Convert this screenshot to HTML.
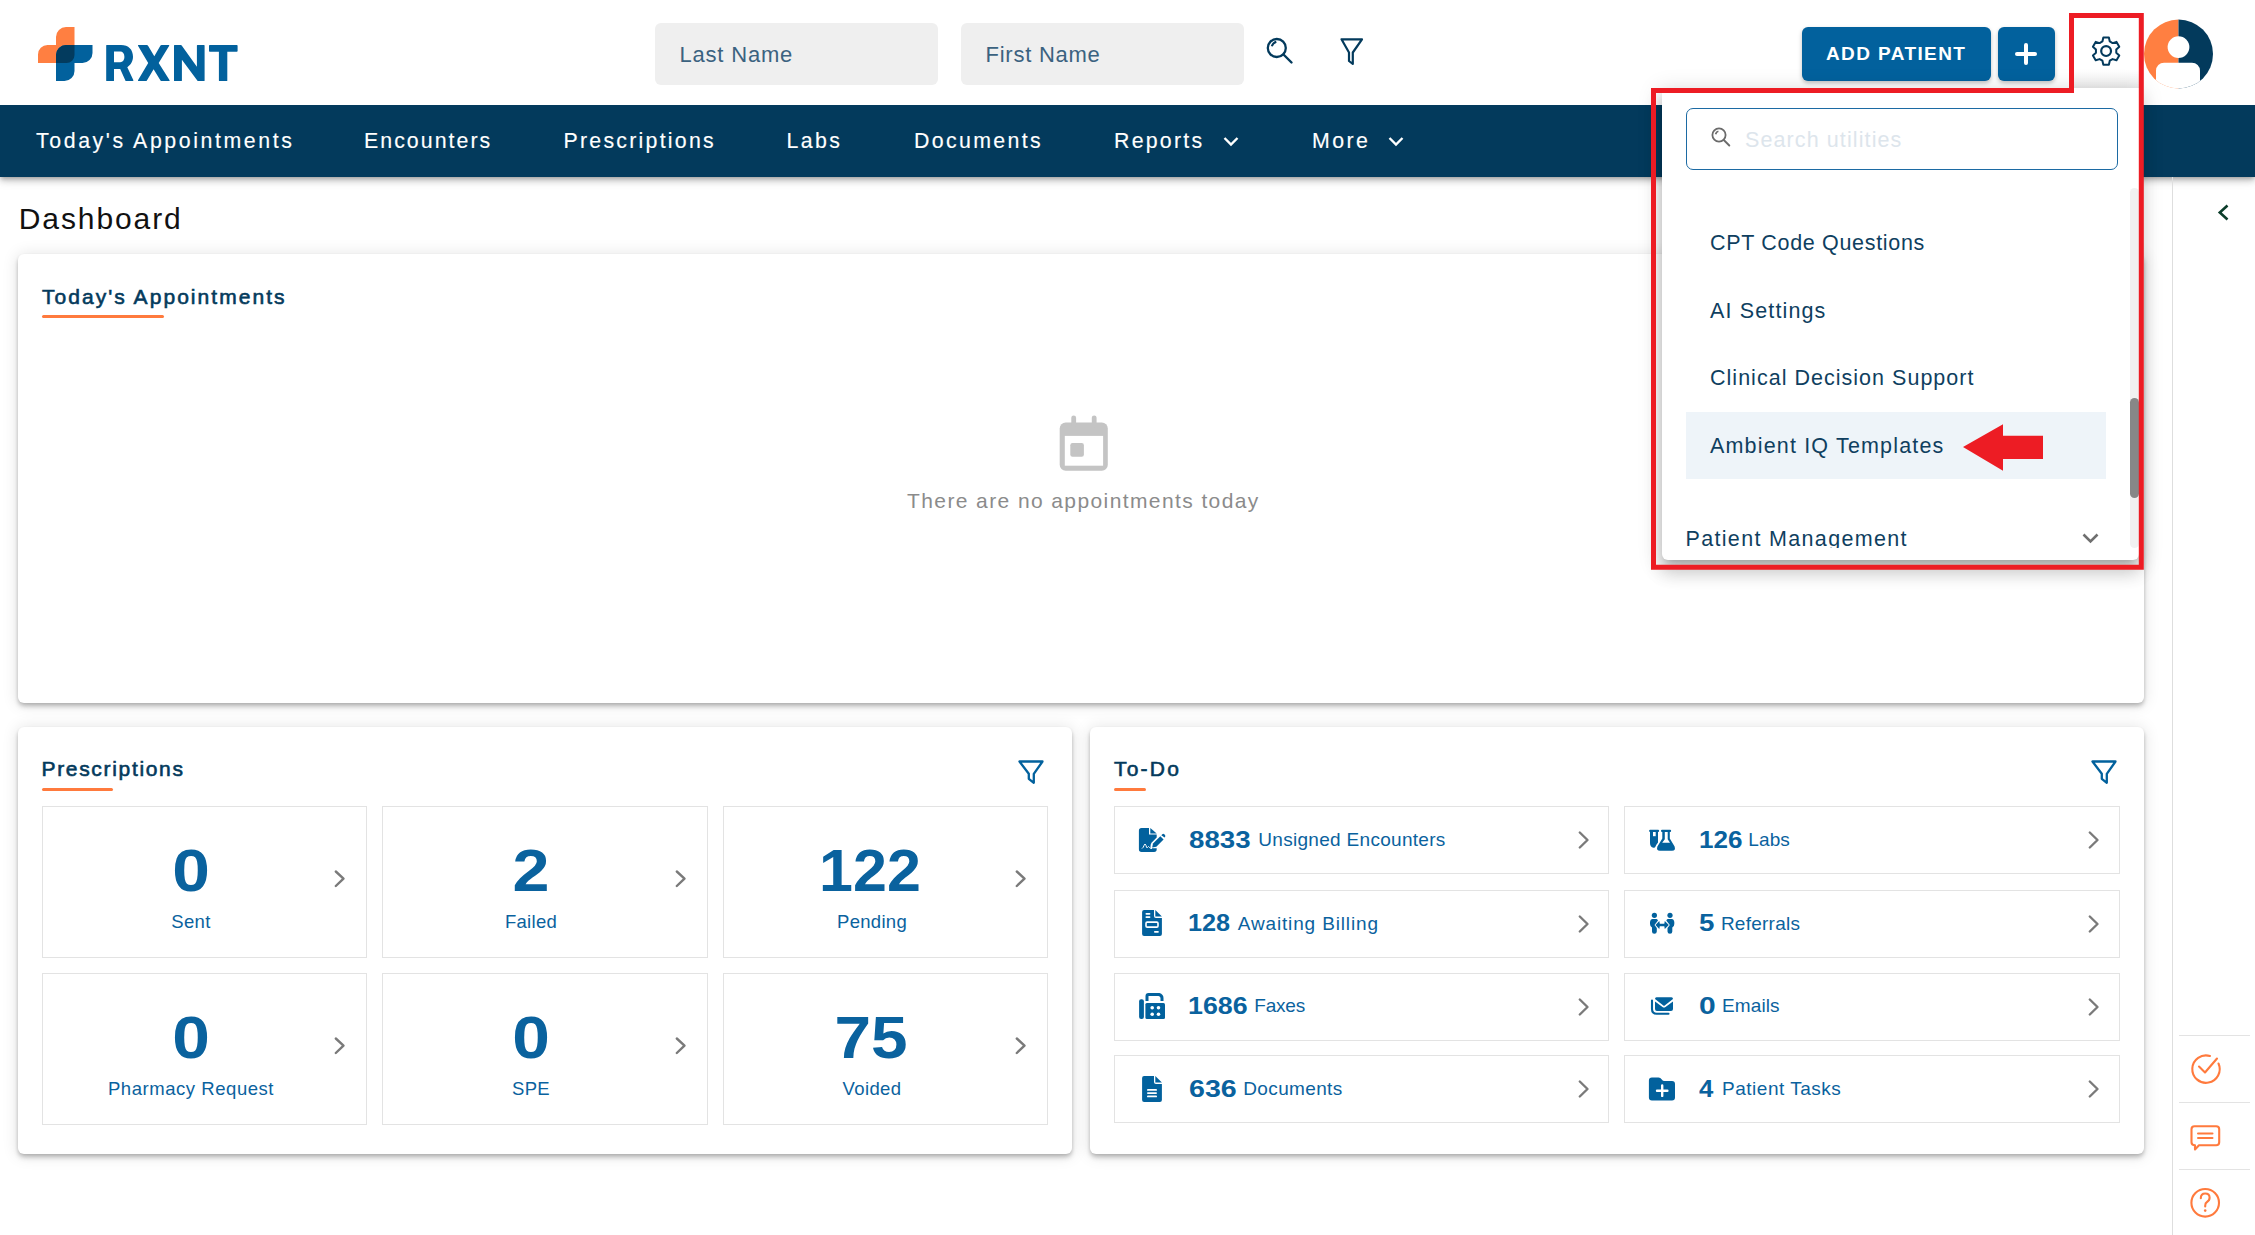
<!DOCTYPE html>
<html><head><meta charset="utf-8"><title>RXNT Dashboard</title>
<style>
html,body{margin:0;padding:0;}
body{width:2255px;height:1235px;overflow:hidden;position:relative;background:#fff;font-family:"Liberation Sans",sans-serif;}
.t{position:absolute;white-space:pre;line-height:1;}
.r{position:absolute;box-sizing:border-box;}
svg{position:absolute;overflow:visible;}
</style></head><body>
<svg style="left:0;top:0" width="260" height="100">
<path d="M56,37 A10,10 0 0 1 66,27 L74.5,27 L74.5,55 A8,8 0 0 1 66.5,63 L38,63 L38,54.5 A9.5,9.5 0 0 1 47.5,45 L56,45 Z" fill="#ff7f41"/>
<path d="M56,55 A10,10 0 0 1 66,45 L92.5,45 L92.5,53 A10,10 0 0 1 82.5,63 L74.5,63 L74.5,71 A10,10 0 0 1 64.5,81 L56,81 Z" fill="#02619d"/>
<path d="M56,55 A10,10 0 0 1 66,45 L74.5,45 L74.5,55 A8,8 0 0 1 66.5,63 L56,63 Z" fill="#033b5e"/>
</svg>
<svg style="left:0;top:0" width="260" height="100"><g fill="#02619d">
<path fill-rule="evenodd" d="M106.6,45 L121,45 C128.5,45 133,49.5 133,56.8 C133,61.5 130.5,65 127.3,67.2 L133.4,80.2 Q133.6,81 132.8,81 L125.6,81 L120.2,68.9 L114,68.9 L114,80.4 Q114,81 113.4,81 L106.6,81 Q106.2,81 106.2,80.4 L106.2,45.5 Q106.2,45 106.6,45 Z M114,51.5 L120.2,51.5 C122.8,51.5 124.4,53.5 124.4,56.8 C124.4,60 122.8,62.2 120.2,62.2 L114,62.2 Z"/>
<path d="M138.4,45 L146.8,45 Q147.5,45 147.9,45.6 L154.3,56.3 L160.5,45.6 Q160.9,45 161.6,45 L168.8,45 Q169.6,45 169.2,45.7 L158.7,63 L169.6,80.3 Q170,81 169.2,81 L161.6,81 Q160.9,81 160.5,80.4 L153.6,69.3 L146.9,80.4 Q146.5,81 145.8,81 L138.4,81 Q137.6,81 138,80.3 L148.2,63 L138,45.7 Q137.6,45 138.4,45 Z"/>
<path d="M174.6,45 L180.9,45 Q181.4,45 181.7,45.5 L196.9,66.8 L196.9,45.6 Q196.9,45 197.5,45 L204,45 Q204.6,45 204.6,45.6 L204.6,80.4 Q204.6,81 204,81 L198.2,81 Q197.6,81 197.3,80.5 L181.9,59.7 L181.9,80.4 Q181.9,81 181.3,81 L174.6,81 Q174,81 174,80.4 L174,45.6 Q174,45 174.6,45 Z"/>
<path d="M209.8,45 L236.8,45 Q237.6,45 237.6,45.8 L237.6,51 Q237.6,51.8 236.8,51.8 L227.3,51.8 L227.3,80.4 Q227.3,81 226.7,81 L219.5,81 Q218.9,81 218.9,80.4 L218.9,51.8 L209.8,51.8 Q209,51.8 209,51 L209,45.8 Q209,45 209.8,45 Z"/>
</g></svg>
<div class="r" style="left:655px;top:23px;width:283px;height:62px;background:#efefef;border-radius:6px;"></div>
<div class="r" style="left:961px;top:23px;width:283px;height:62px;background:#efefef;border-radius:6px;"></div>
<div class="t " style="left:679.5px;top:43.57px;font-size:22px;color:#3b6280;font-weight:400;letter-spacing:0.8px;">Last Name</div>
<div class="t " style="left:985.5px;top:43.57px;font-size:22px;color:#3b6280;font-weight:400;letter-spacing:0.75px;">First Name</div>
<svg style="left:1260px;top:30px" width="40" height="40" viewBox="1260 30 40 40">
<circle cx="1276.8" cy="48" r="9" fill="none" stroke="#033a5c" stroke-width="2.3"/>
<path d="M1283.5,54.5 L1291.5,62.5" stroke="#033a5c" stroke-width="2.4" stroke-linecap="round"/>
<path d="M1271.8,46.3 Q1272.8,43 1276.3,41.8" fill="none" stroke="#033a5c" stroke-width="2"/>
</svg>
<svg style="left:1330px;top:30px" width="40" height="40" viewBox="1330 30 40 40">
<path d="M1341.5,39.3 L1362,39.3 L1352.8,52.5 L1352.8,64 L1349,61 L1349,52.5 Z" fill="none" stroke="#033a5c" stroke-width="2.2" stroke-linejoin="round"/>
</svg>
<div class="r" style="left:1802px;top:27px;width:189px;height:54px;background:#02619d;border-radius:6px;box-shadow:0 2px 4px rgba(0,0,0,.25);"></div>
<div class="t " style="left:1826.0px;top:44.21px;font-size:19px;color:#fff;font-weight:700;letter-spacing:1.4px;">ADD PATIENT</div>
<div class="r" style="left:1998px;top:27px;width:57px;height:54px;background:#02619d;border-radius:6px;box-shadow:0 2px 4px rgba(0,0,0,.25);"></div>
<div class="r" style="left:2015px;top:51.5px;width:22px;height:4px;background:#fff;border-radius:2px;"></div>
<div class="r" style="left:2024px;top:42.5px;width:4px;height:22px;background:#fff;border-radius:2px;"></div>
<div class="r" style="left:2074px;top:70px;width:65px;height:18px;background:linear-gradient(rgba(0,0,0,0),rgba(0,0,0,.07));"></div>
<svg style="left:0;top:0" width="2255" height="100"><path d="M2103.33,37.48 L2108.87,37.48 L2109.79,41.48 L2112.58,43.10 L2116.51,41.89 L2119.28,46.69 L2116.27,49.49 L2116.27,52.71 L2119.28,55.51 L2116.51,60.31 L2112.58,59.10 L2109.79,60.72 L2108.87,64.72 L2103.33,64.72 L2102.41,60.72 L2099.62,59.10 L2095.69,60.31 L2092.92,55.51 L2095.93,52.71 L2095.93,49.49 L2092.92,46.69 L2095.69,41.89 L2099.62,43.10 L2102.41,41.48 Z" fill="none" stroke="#033a5c" stroke-width="2" stroke-linejoin="round"/>
<circle cx="2106.1" cy="51.1" r="4.9" fill="none" stroke="#033a5c" stroke-width="2.2"/></svg>
<svg style="left:0;top:0" width="2255" height="100">
<defs><clipPath id="av"><circle cx="2178.5" cy="54" r="34.5"/></clipPath></defs>
<g clip-path="url(#av)">
<rect x="2140" y="15" width="38.5" height="80" fill="#ff7f41"/>
<rect x="2178.5" y="15" width="40" height="80" fill="#033a5c"/>
<circle cx="2178.5" cy="47.1" r="10.9" fill="#fff"/>
<rect x="2156" y="62.7" width="44" height="40" rx="8" fill="#fff"/>
</g></svg>
<div class="r" style="left:0px;top:105px;width:2255px;height:72px;background:#033a5c;clip-path:inset(0 0 -40px 0);box-shadow:0 2px 4px -1px rgba(0,0,0,.22),0 4px 6px 0 rgba(0,0,0,.16),0 2px 12px 0 rgba(0,0,0,.12);"></div>
<div class="t " style="left:36.0px;top:130.77px;font-size:21.3px;color:#fff;font-weight:400;letter-spacing:2.6px;-webkit-text-stroke:0.15px #fff;">Today's Appointments</div>
<div class="t " style="left:364.0px;top:130.77px;font-size:21.3px;color:#fff;font-weight:400;letter-spacing:2.0500000000000003px;-webkit-text-stroke:0.15px #fff;">Encounters</div>
<div class="t " style="left:563.5px;top:130.77px;font-size:21.3px;color:#fff;font-weight:400;letter-spacing:2.2600000000000002px;-webkit-text-stroke:0.15px #fff;">Prescriptions</div>
<div class="t " style="left:786.5px;top:130.77px;font-size:21.3px;color:#fff;font-weight:400;letter-spacing:2.43px;-webkit-text-stroke:0.15px #fff;">Labs</div>
<div class="t " style="left:914.0px;top:130.77px;font-size:21.3px;color:#fff;font-weight:400;letter-spacing:2.3800000000000003px;-webkit-text-stroke:0.15px #fff;">Documents</div>
<div class="t " style="left:1114.0px;top:130.77px;font-size:21.3px;color:#fff;font-weight:400;letter-spacing:2.2600000000000002px;-webkit-text-stroke:0.15px #fff;">Reports</div>
<div class="t " style="left:1312.0px;top:130.77px;font-size:21.3px;color:#fff;font-weight:400;letter-spacing:2.48px;-webkit-text-stroke:0.15px #fff;">More</div>
<svg style="left:1221px;top:132px" width="20" height="20"><path d="M3.5,6 L10,12.5 L16.5,6" fill="none" stroke="#fff" stroke-width="2.4"/></svg>
<svg style="left:1386px;top:132px" width="20" height="20"><path d="M3.5,6 L10,12.5 L16.5,6" fill="none" stroke="#fff" stroke-width="2.4"/></svg>
<div class="t " style="left:18.8px;top:203.50px;font-size:30px;color:#111;font-weight:400;letter-spacing:1.9px;">Dashboard</div>
<div class="r" style="left:18px;top:254px;width:2126px;height:449px;background:#fff;border-radius:6px;box-shadow:0 2px 4px -1px rgba(0,0,0,.2),0 4px 5px 0 rgba(0,0,0,.14),0 1px 16px 1px rgba(0,0,0,.11);"></div>
<div class="r" style="left:18px;top:727px;width:1054px;height:427px;background:#fff;border-radius:6px;box-shadow:0 2px 4px -1px rgba(0,0,0,.2),0 4px 5px 0 rgba(0,0,0,.14),0 1px 16px 1px rgba(0,0,0,.11);"></div>
<div class="r" style="left:1090px;top:727px;width:1054px;height:427px;background:#fff;border-radius:6px;box-shadow:0 2px 4px -1px rgba(0,0,0,.2),0 4px 5px 0 rgba(0,0,0,.14),0 1px 16px 1px rgba(0,0,0,.11);"></div>
<div class="t " style="left:42.0px;top:286.32px;font-size:21px;color:#033a5c;font-weight:400;letter-spacing:2.05px;-webkit-text-stroke:0.6px #033a5c;">Today's Appointments</div>
<div class="r" style="left:42px;top:315px;width:122px;height:3px;background:#ff7a3d;border-radius:2px;"></div>
<svg style="left:1059px;top:414px" width="50" height="58" viewBox="0 0 50 58">
<rect x="0.7" y="8.5" width="48.1" height="48.2" rx="6" fill="#c4c4c4"/>
<rect x="5.8" y="21.9" width="38.3" height="29.8" fill="#fff"/>
<rect x="11.3" y="29" width="13.6" height="13.7" rx="2.2" fill="#c4c4c4"/>
<rect x="12.3" y="1.4" width="4.8" height="12" rx="2.4" fill="#c4c4c4"/>
<rect x="32.8" y="1.4" width="4.8" height="12" rx="2.4" fill="#c4c4c4"/>
</svg>
<div class="t " style="left:907.0px;top:490.32px;font-size:21px;color:#8b8b8b;font-weight:400;letter-spacing:1.4px;">There are no appointments today</div>
<div class="t " style="left:41.5px;top:758.02px;font-size:21px;color:#033a5c;font-weight:400;letter-spacing:1.67px;-webkit-text-stroke:0.6px #033a5c;">Prescriptions</div>
<div class="r" style="left:42px;top:788px;width:71px;height:3px;background:#ff7a3d;border-radius:2px;"></div>
<div class="t " style="left:1114.0px;top:758.02px;font-size:21px;color:#033a5c;font-weight:400;letter-spacing:2.2px;-webkit-text-stroke:0.6px #033a5c;">To-Do</div>
<div class="r" style="left:1114px;top:788px;width:32px;height:3px;background:#ff7a3d;border-radius:2px;"></div>
<div class="r" style="left:42px;top:806px;width:325px;height:152px;border:1px solid #e3e3e3;background:#fff;"></div>
<div class="t" style="left:41.0px;top:841.20px;width:300px;text-align:center;font-size:60px;font-weight:700;color:#0a629e;transform:scaleX(1.127);">0</div>
<div class="t" style="left:41.0px;top:912.64px;width:300px;text-align:center;font-size:18.5px;color:#0a629e;letter-spacing:0.3px">Sent</div>
<svg style="left:334px;top:870px" width="14" height="20"><path d="M1.8,1.5 L9.5,8.6 L1.8,16" fill="none" stroke="#7a7a7a" stroke-width="2.4" stroke-linecap="round" stroke-linejoin="round"/></svg>
<div class="r" style="left:382px;top:806px;width:326px;height:152px;border:1px solid #e3e3e3;background:#fff;"></div>
<div class="t" style="left:381.0px;top:841.20px;width:300px;text-align:center;font-size:60px;font-weight:700;color:#0a629e;transform:scaleX(1.107);">2</div>
<div class="t" style="left:381.0px;top:912.64px;width:300px;text-align:center;font-size:18.5px;color:#0a629e;letter-spacing:0.3px">Failed</div>
<svg style="left:675px;top:870px" width="14" height="20"><path d="M1.8,1.5 L9.5,8.6 L1.8,16" fill="none" stroke="#7a7a7a" stroke-width="2.4" stroke-linecap="round" stroke-linejoin="round"/></svg>
<div class="r" style="left:723px;top:806px;width:325px;height:152px;border:1px solid #e3e3e3;background:#fff;"></div>
<div class="t" style="left:720.0px;top:841.20px;width:300px;text-align:center;font-size:60px;font-weight:700;color:#0a629e;transform:scaleX(1.017);">122</div>
<div class="t" style="left:722.0px;top:912.64px;width:300px;text-align:center;font-size:18.5px;color:#0a629e;letter-spacing:0.3px">Pending</div>
<svg style="left:1015px;top:870px" width="14" height="20"><path d="M1.8,1.5 L9.5,8.6 L1.8,16" fill="none" stroke="#7a7a7a" stroke-width="2.4" stroke-linecap="round" stroke-linejoin="round"/></svg>
<div class="r" style="left:42px;top:973px;width:325px;height:152px;border:1px solid #e3e3e3;background:#fff;"></div>
<div class="t" style="left:41.0px;top:1008.20px;width:300px;text-align:center;font-size:60px;font-weight:700;color:#0a629e;transform:scaleX(1.127);">0</div>
<div class="t" style="left:41.0px;top:1079.64px;width:300px;text-align:center;font-size:18.5px;color:#0a629e;letter-spacing:0.55px">Pharmacy Request</div>
<svg style="left:334px;top:1037px" width="14" height="20"><path d="M1.8,1.5 L9.5,8.6 L1.8,16" fill="none" stroke="#7a7a7a" stroke-width="2.4" stroke-linecap="round" stroke-linejoin="round"/></svg>
<div class="r" style="left:382px;top:973px;width:326px;height:152px;border:1px solid #e3e3e3;background:#fff;"></div>
<div class="t" style="left:381.0px;top:1008.20px;width:300px;text-align:center;font-size:60px;font-weight:700;color:#0a629e;transform:scaleX(1.127);">0</div>
<div class="t" style="left:381.0px;top:1079.64px;width:300px;text-align:center;font-size:18.5px;color:#0a629e;letter-spacing:0.3px">SPE</div>
<svg style="left:675px;top:1037px" width="14" height="20"><path d="M1.8,1.5 L9.5,8.6 L1.8,16" fill="none" stroke="#7a7a7a" stroke-width="2.4" stroke-linecap="round" stroke-linejoin="round"/></svg>
<div class="r" style="left:723px;top:973px;width:325px;height:152px;border:1px solid #e3e3e3;background:#fff;"></div>
<div class="t" style="left:721.0px;top:1008.20px;width:300px;text-align:center;font-size:60px;font-weight:700;color:#0a629e;transform:scaleX(1.095);">75</div>
<div class="t" style="left:722.0px;top:1079.64px;width:300px;text-align:center;font-size:18.5px;color:#0a629e;letter-spacing:0.4px">Voided</div>
<svg style="left:1015px;top:1037px" width="14" height="20"><path d="M1.8,1.5 L9.5,8.6 L1.8,16" fill="none" stroke="#7a7a7a" stroke-width="2.4" stroke-linecap="round" stroke-linejoin="round"/></svg>
<svg style="left:1018px;top:760px" width="30" height="30"><path d="M1.5,1.5 L24.5,1.5 L15.8,13.8 L15.8,22.8 L10.8,18.8 L10.8,13.8 Z" fill="none" stroke="#02619d" stroke-width="2.3" stroke-linejoin="round"/></svg>
<svg style="left:2090.5px;top:760px" width="30" height="30"><path d="M1.5,1.5 L24.5,1.5 L15.8,13.8 L15.8,22.8 L10.8,18.8 L10.8,13.8 Z" fill="none" stroke="#02619d" stroke-width="2.3" stroke-linejoin="round"/></svg>
<div class="r" style="left:1114.3px;top:806.4px;width:495px;height:68px;border:1px solid #e3e3e3;background:#fff;"></div>
<div class="t " style="left:1189.1px;top:827.96px;font-size:24.5px;color:#0a629e;font-weight:700;letter-spacing:0px;transform:scaleX(1.13);transform-origin:0 0;">8833</div>
<div class="t " style="left:1258.3px;top:830.21px;font-size:19px;color:#0a629e;font-weight:400;letter-spacing:0.3px;">Unsigned Encounters</div>
<svg style="left:1577.8px;top:831.4px" width="14" height="20"><path d="M1.8,1.5 L9.5,9 L1.8,16.5" fill="none" stroke="#7a7a7a" stroke-width="2.4" stroke-linecap="round" stroke-linejoin="round"/></svg>
<div class="r" style="left:1624.4px;top:806.4px;width:496px;height:68px;border:1px solid #e3e3e3;background:#fff;"></div>
<div class="t " style="left:1698.6px;top:827.96px;font-size:24.5px;color:#0a629e;font-weight:700;letter-spacing:0px;transform:scaleX(1.064);transform-origin:0 0;">126</div>
<div class="t " style="left:1748.3px;top:830.21px;font-size:19px;color:#0a629e;font-weight:400;letter-spacing:0.1px;">Labs</div>
<svg style="left:2087.9px;top:831.4px" width="14" height="20"><path d="M1.8,1.5 L9.5,9 L1.8,16.5" fill="none" stroke="#7a7a7a" stroke-width="2.4" stroke-linecap="round" stroke-linejoin="round"/></svg>
<div class="r" style="left:1114.3px;top:889.7px;width:495px;height:68px;border:1px solid #e3e3e3;background:#fff;"></div>
<div class="t " style="left:1188.1px;top:911.26px;font-size:24.5px;color:#0a629e;font-weight:700;letter-spacing:0px;transform:scaleX(1.03);transform-origin:0 0;">128</div>
<div class="t " style="left:1237.7px;top:913.51px;font-size:19px;color:#0a629e;font-weight:400;letter-spacing:0.86px;">Awaiting Billing</div>
<svg style="left:1577.8px;top:914.7px" width="14" height="20"><path d="M1.8,1.5 L9.5,9 L1.8,16.5" fill="none" stroke="#7a7a7a" stroke-width="2.4" stroke-linecap="round" stroke-linejoin="round"/></svg>
<div class="r" style="left:1624.4px;top:889.7px;width:496px;height:68px;border:1px solid #e3e3e3;background:#fff;"></div>
<div class="t " style="left:1699.4px;top:911.26px;font-size:24.5px;color:#0a629e;font-weight:700;letter-spacing:0px;transform:scaleX(1.13);transform-origin:0 0;">5</div>
<div class="t " style="left:1720.9px;top:913.51px;font-size:19px;color:#0a629e;font-weight:400;letter-spacing:0.25px;">Referrals</div>
<svg style="left:2087.9px;top:914.7px" width="14" height="20"><path d="M1.8,1.5 L9.5,9 L1.8,16.5" fill="none" stroke="#7a7a7a" stroke-width="2.4" stroke-linecap="round" stroke-linejoin="round"/></svg>
<div class="r" style="left:1114.3px;top:972.5px;width:495px;height:68px;border:1px solid #e3e3e3;background:#fff;"></div>
<div class="t " style="left:1188.1px;top:994.06px;font-size:24.5px;color:#0a629e;font-weight:700;letter-spacing:0px;transform:scaleX(1.094);transform-origin:0 0;">1686</div>
<div class="t " style="left:1254.3px;top:996.31px;font-size:19px;color:#0a629e;font-weight:400;letter-spacing:-0.2px;">Faxes</div>
<svg style="left:1577.8px;top:997.5px" width="14" height="20"><path d="M1.8,1.5 L9.5,9 L1.8,16.5" fill="none" stroke="#7a7a7a" stroke-width="2.4" stroke-linecap="round" stroke-linejoin="round"/></svg>
<div class="r" style="left:1624.4px;top:972.5px;width:496px;height:68px;border:1px solid #e3e3e3;background:#fff;"></div>
<div class="t " style="left:1699.4px;top:994.06px;font-size:24.5px;color:#0a629e;font-weight:700;letter-spacing:0px;transform:scaleX(1.225);transform-origin:0 0;">0</div>
<div class="t " style="left:1722.1px;top:996.31px;font-size:19px;color:#0a629e;font-weight:400;letter-spacing:0.1px;">Emails</div>
<svg style="left:2087.9px;top:997.5px" width="14" height="20"><path d="M1.8,1.5 L9.5,9 L1.8,16.5" fill="none" stroke="#7a7a7a" stroke-width="2.4" stroke-linecap="round" stroke-linejoin="round"/></svg>
<div class="r" style="left:1114.3px;top:1055.2px;width:495px;height:68px;border:1px solid #e3e3e3;background:#fff;"></div>
<div class="t " style="left:1189.4px;top:1076.76px;font-size:24.5px;color:#0a629e;font-weight:700;letter-spacing:0px;transform:scaleX(1.167);transform-origin:0 0;">636</div>
<div class="t " style="left:1243.3px;top:1079.01px;font-size:19px;color:#0a629e;font-weight:400;letter-spacing:0.35px;">Documents</div>
<svg style="left:1577.8px;top:1080.2px" width="14" height="20"><path d="M1.8,1.5 L9.5,9 L1.8,16.5" fill="none" stroke="#7a7a7a" stroke-width="2.4" stroke-linecap="round" stroke-linejoin="round"/></svg>
<div class="r" style="left:1624.4px;top:1055.2px;width:496px;height:68px;border:1px solid #e3e3e3;background:#fff;"></div>
<div class="t " style="left:1699.4px;top:1076.76px;font-size:24.5px;color:#0a629e;font-weight:700;letter-spacing:0px;transform:scaleX(1.05);transform-origin:0 0;">4</div>
<div class="t " style="left:1722.1px;top:1079.01px;font-size:19px;color:#0a629e;font-weight:400;letter-spacing:0.5px;">Patient Tasks</div>
<svg style="left:2087.9px;top:1080.2px" width="14" height="20"><path d="M1.8,1.5 L9.5,9 L1.8,16.5" fill="none" stroke="#7a7a7a" stroke-width="2.4" stroke-linecap="round" stroke-linejoin="round"/></svg>
<svg style="left:1130px;top:820px" width="50" height="40" viewBox="0 0 50 40"><path d="M11.5,8.1 L19,8.1 L19,14.6 L26.7,14.6 L26.7,17.5 L21.5,22.8 Q20.5,24.5 20.5,26.5 L20.5,28.2 L26.7,28.2 L26.7,29.3 Q26.7,31.9 24.1,31.9 L11.5,31.9 Q8.9,31.9 8.9,29.3 L8.9,10.7 Q8.9,8.1 11.5,8.1 Z" fill="#02619d"/>
<path d="M20.3,8.1 L26.7,13.6 L20.3,13.6 Z" fill="#02619d"/>
<path d="M12,28.5 Q13.5,27.5 14,25.5 Q15,22.5 16,25.5 Q16.5,28.5 17.5,27.5 Q18.5,25.5 19.5,27.5 Q20,28.5 22,28.5" fill="none" stroke="#fff" stroke-width="1"/>
<path d="M22.2,27.6 L23,23.5 L30.3,16.2 L33.6,19.5 L26.3,26.8 Z" fill="#02619d"/>
<path d="M31.3,15.2 L32.3,14.2 Q33.3,13.5 34.3,14.2 L35,14.9 Q35.7,15.9 35,16.9 L34.6,17.5 Z" fill="#02619d"/></svg>
<svg style="left:1130px;top:903px" width="50" height="40" viewBox="0 0 50 40"><path d="M14.1,7 L24,7 L24,13 Q24,15 26,15 L31.9,15 L31.9,31 Q31.9,33 29.9,33 L14.1,33 Q12.1,33 12.1,31 L12.1,9 Q12.1,7 14.1,7 Z" fill="#02619d"/>
<path d="M25.3,7 L31.9,13.5 L25.3,13.5 Z" fill="#02619d"/>
<rect x="15.5" y="10" width="4.9" height="1.8" rx="0.8" fill="#fff"/>
<rect x="15.5" y="13.3" width="4.9" height="1.8" rx="0.8" fill="#fff"/>
<rect x="16" y="19.1" width="12" height="5" rx="1.2" fill="none" stroke="#fff" stroke-width="1.6"/>
<rect x="24" y="27.9" width="4.8" height="1.9" rx="0.8" fill="#fff"/></svg>
<svg style="left:1130px;top:986px" width="50" height="40" viewBox="0 0 50 40"><rect x="9.1" y="13.3" width="4.8" height="19.6" rx="2" fill="#02619d"/>
<rect x="15.4" y="17" width="19.6" height="15.9" rx="1.5" fill="#02619d"/>
<path d="M17,14.9 L17,10 Q17,8.5 18.5,8.5 L29,8.5 Q32,9.5 32,12 L32,14.9" fill="none" stroke="#02619d" stroke-width="3"/>
<circle cx="22.2" cy="21.7" r="1.8" fill="#fff"/><circle cx="28.5" cy="21.7" r="1.8" fill="#fff"/>
<circle cx="22.2" cy="28.3" r="1.8" fill="#fff"/><circle cx="28.5" cy="28.3" r="1.8" fill="#fff"/></svg>
<svg style="left:1130px;top:1069px" width="50" height="40" viewBox="0 0 50 40"><path d="M14.1,7 L24,7 L24,13 Q24,15 26,15 L31.9,15 L31.9,31 Q31.9,33 29.9,33 L14.1,33 Q12.1,33 12.1,31 L12.1,9 Q12.1,7 14.1,7 Z" fill="#02619d"/>
<path d="M25.3,7 L31.9,13.5 L25.3,13.5 Z" fill="#02619d"/>
<rect x="17" y="20" width="10" height="1.8" rx="0.9" fill="#fff"/>
<rect x="17" y="23.2" width="10" height="1.8" rx="0.9" fill="#fff"/>
<rect x="17" y="26.5" width="10" height="1.8" rx="0.9" fill="#fff"/></svg>
<svg style="left:1640px;top:820px" width="50" height="40" viewBox="0 0 50 40"><rect x="9.1" y="9.7" width="10" height="2.4" rx="1" fill="#02619d"/>
<path d="M10,11.5 L18,11.5 L18,22.5 Q16,25 15.5,26.5 Q15,28 13.5,27.8 Q10,27 10,23 Z" fill="#02619d"/>
<rect x="13" y="12" width="2.7" height="4.2" fill="#fff"/>
<rect x="21" y="9.7" width="10.1" height="2.4" rx="1" fill="#02619d"/>
<path d="M22.3,11.5 L29.8,11.5 L29.8,18.5 L34.6,26.5 Q36,30.8 32,30.8 L20,30.8 Q16,30.8 17.4,26.5 L22.3,18.5 Z" fill="#02619d"/>
<path d="M24.8,12 L27.7,12 L27.7,19.2 L30,22.8 L22.2,22.8 L24.8,19.2 Z" fill="#fff"/></svg>
<svg style="left:1640px;top:903px" width="50" height="40" viewBox="0 0 50 40"><circle cx="14.4" cy="12.3" r="2.6" fill="#02619d"/><circle cx="30" cy="12.3" r="2.6" fill="#02619d"/>
<path d="M12.5,16 L16.5,16 Q17.5,16.3 18,17.5 L14.5,22 L16.8,25 L16.8,28.5 Q16.8,30.8 14.3,30.8 Q12,30.8 12,28.5 L12,24.5 Q10,23.5 10,21 L10,19 Q10.5,16 12.5,16 Z" fill="#02619d"/>
<path d="M31.8,16 L27.8,16 Q26.8,16.3 26.3,17.5 L29.8,22 L27.5,25 L27.5,28.5 Q27.5,30.8 30,30.8 Q32.3,30.8 32.3,28.5 L32.3,24.5 Q34.3,23.5 34.3,21 L34.3,19 Q33.8,16 31.8,16 Z" fill="#02619d"/>
<path d="M15.5,22 L19.3,18 L19.8,20.7 L24.3,20.7 L24.8,18 L28.8,22 L24.8,26 L24.3,23.3 L19.8,23.3 L19.3,26 Z" fill="#02619d"/></svg>
<svg style="left:1640px;top:986px" width="50" height="40" viewBox="0 0 50 40"><path d="M16.5,11.2 L31.5,11.2 Q33,11.5 33,13 L24,20 L15,13 Q15,11.5 16.5,11.2 Z" fill="#02619d"/>
<path d="M15,15.5 L22.5,21 Q24,22 25.5,21 L33,15.5 L33,23 Q33,24.9 31,24.9 L17,24.9 Q15,24.9 15,23 Z" fill="#02619d"/>
<path d="M12,14.5 L12,23 Q12,27.7 16.7,27.7 L28.5,27.7" fill="none" stroke="#02619d" stroke-width="2.1" stroke-linecap="round"/></svg>
<svg style="left:1640px;top:1069px" width="50" height="40" viewBox="0 0 50 40"><path d="M11.9,8.6 L18.5,8.6 Q20.5,8.6 21.8,10.5 Q22.8,12 24.5,12 L32,12 Q35,12 35,15 L35,28.6 Q35,31.6 32,31.6 L11.9,31.6 Q8.9,31.6 8.9,28.6 L8.9,11.6 Q8.9,8.6 11.9,8.6 Z" fill="#02619d"/>
<path d="M17,21.7 L27.4,21.7 M22.2,16.5 L22.2,26.9" stroke="#fff" stroke-width="2.4" stroke-linecap="round"/></svg>
<div class="r" style="left:2172px;top:177px;width:1px;height:1058px;background:#dedede;"></div>
<svg style="left:2213px;top:202px" width="20" height="24"><path d="M14.5,3.5 L6.8,10.5 L14.5,17.5" fill="none" stroke="#0b3d2a" stroke-width="2.6"/></svg>
<div class="r" style="left:2179px;top:1035px;width:71px;height:1px;background:#e3e3e3;"></div>
<div class="r" style="left:2179px;top:1102px;width:71px;height:1px;background:#e3e3e3;"></div>
<div class="r" style="left:2179px;top:1169px;width:71px;height:1px;background:#e3e3e3;"></div>
<svg style="left:2180px;top:1040px" width="50" height="190" viewBox="2180 1040 50 190">
<path d="M2218.5,1063.5 A13.7,13.7 0 1 1 2210,1056" fill="none" stroke="#ff7a3d" stroke-width="2.1" stroke-linecap="round"/>
<path d="M2199,1066.5 L2205,1072.5 L2217,1058.5" fill="none" stroke="#ff7a3d" stroke-width="2.1" stroke-linecap="round" stroke-linejoin="round"/>
<path d="M2194.5,1126.3 L2216.2,1126.3 Q2219.2,1126.3 2219.2,1129.3 L2219.2,1142.3 Q2219.2,1145.3 2216.2,1145.3 L2199,1145.3 L2195,1149.5 L2195,1145.3 Q2191.5,1145.3 2191.5,1142.3 L2191.5,1129.3 Q2191.5,1126.3 2194.5,1126.3 Z" fill="none" stroke="#ff7a3d" stroke-width="2.1" stroke-linejoin="round"/>
<path d="M2198,1133.5 L2212.5,1133.5 M2198,1138 L2212.5,1138" stroke="#ff7a3d" stroke-width="2" stroke-linecap="round"/>
<circle cx="2205.2" cy="1202.8" r="13.8" fill="none" stroke="#ff7a3d" stroke-width="2.1"/>
<path d="M2200.8,1198.3 Q2200.8,1193.5 2205.2,1193.5 Q2209.6,1193.5 2209.6,1197.8 Q2209.6,1200.5 2207,1202 Q2205.2,1203 2205.2,1205.8 L2205.2,1206.5" fill="none" stroke="#ff7a3d" stroke-width="2.1" stroke-linecap="round"/>
<circle cx="2205.2" cy="1210.6" r="1.3" fill="#ff7a3d"/>
</svg>
<div class="r" style="left:1662px;top:88px;width:477px;height:472px;background:#fff;border-radius:0 0 6px 6px;box-shadow:0 7px 8px -4px rgba(0,0,0,.2),0 12px 17px 2px rgba(0,0,0,.14),0 5px 22px 4px rgba(0,0,0,.12);"></div>
<div class="r" style="left:1686px;top:108px;width:432px;height:62px;border:1.6px solid #1c6aa3;border-radius:7px;background:#fff;"></div>
<svg style="left:1700px;top:120px" width="40" height="40" viewBox="1700 120 40 40">
<circle cx="1719" cy="135" r="6.6" fill="none" stroke="#6b6b6b" stroke-width="1.8"/>
<path d="M1723.8,140 L1729.3,145.5" stroke="#6b6b6b" stroke-width="1.9" stroke-linecap="round"/>
<path d="M1715.6,134.2 Q1716.1,131.9 1718.4,131.3" fill="none" stroke="#6b6b6b" stroke-width="1.7"/>
</svg>
<div class="t " style="left:1745.0px;top:129.80px;font-size:21.5px;color:#dde5ec;font-weight:400;letter-spacing:1.1px;">Search utilities</div>
<div class="r" style="left:1686px;top:412px;width:420px;height:67px;background:#eef4f9;"></div>
<div class="t " style="left:1710.0px;top:232.50px;font-size:21.5px;color:#0f3f5f;font-weight:400;letter-spacing:0.68px;">CPT Code Questions</div>
<div class="t " style="left:1710.0px;top:300.60px;font-size:21.5px;color:#0f3f5f;font-weight:400;letter-spacing:1.14px;">AI Settings</div>
<div class="t " style="left:1710.0px;top:367.80px;font-size:21.5px;color:#0f3f5f;font-weight:400;letter-spacing:1.02px;">Clinical Decision Support</div>
<div class="t " style="left:1710.0px;top:435.60px;font-size:21.5px;color:#0f3f5f;font-weight:400;letter-spacing:1.17px;">Ambient IQ Templates</div>
<div style="position:absolute;left:1662px;top:510px;width:460px;height:37.5px;overflow:hidden"><div class="t" style="left:23.5px;top:18.60px;font-size:21.5px;color:#0f3f5f;letter-spacing:1.33px">Patient Management</div></div>
<svg style="left:2080px;top:530px" width="22" height="18"><path d="M3.5,4.5 L10.5,11.5 L17.5,4.5" fill="none" stroke="#6f6f6f" stroke-width="2.6"/></svg>
<div class="r" style="left:2130px;top:188px;width:9px;height:360px;background:#f1f1f1;border-radius:5px;"></div>
<div class="r" style="left:2130px;top:398px;width:9px;height:100px;background:#878787;border-radius:5px;"></div>
<svg style="left:0;top:0" width="2255" height="1235">
<path d="M1653.5,567.3 L1653.5,90.5 L2071.5,90.5 L2071.5,15.5 L2141.3,15.5 L2141.3,567.3 Z" fill="none" stroke="#ed1c24" stroke-width="5"/>
<path d="M1963,447 L2003,424.2 L2003,435.8 L2043,435.8 L2043,458.9 L2003,458.9 L2003,470.8 Z" fill="#ed1c24"/>
</svg>
</body></html>
